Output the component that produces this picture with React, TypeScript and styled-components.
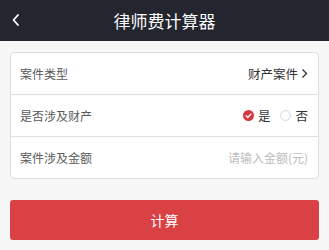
import React from "react";
import styled, { createGlobalStyle } from "styled-components";

const Global = createGlobalStyle`
  html, body { margin: 0; padding: 0; background: #f7f7f7; }
  body { font-family: "Noto Sans CJK SC", "Noto Sans", sans-serif; }
`;

const Page = styled.div`
  width: 329px;
  height: 250px;
  background: #f7f7f7;
  display: flex;
  flex-direction: column;
`;

const Header = styled.div`
  height: 41px;
  background: #23262e;
  display: flex;
  align-items: center;
  justify-content: center;
  position: relative;
  color: #fff;
  font-size: 17px;
`;

const Back = styled.div`
  position: absolute;
  left: 11px;
  top: 13px;
  width: 10px;
  height: 14px;
  display: flex;
`;

const Card = styled.div`
  margin: 11px 10px 0 10px;
  background: #fff;
  border: 1px solid #dedede;
  border-radius: 4px;
  display: flex;
  flex-direction: column;
`;

const Row = styled.div<{ $last?: boolean }>`
  height: 41px;
  display: flex;
  align-items: center;
  justify-content: space-between;
  padding: 0 10px 0 9px;
  border-bottom: ${(p) => (p.$last ? "none" : "1px solid #e0e0e0")};
`;

const Label = styled.span`
  font-size: 12px;
  color: #5a5a5a;
`;

const Value = styled.span`
  font-size: 12.5px;
  color: #333;
  display: flex;
  align-items: center;
  gap: 3px;
`;

const Placeholder = styled.span`
  font-size: 12px;
  color: #bcbcbc;
`;

const Radios = styled.div`
  display: flex;
  align-items: center;
  gap: 10px;
`;

const RadioItem = styled.span`
  display: flex;
  align-items: center;
  gap: 4px;
  font-size: 12.5px;
  color: #333;
`;

const Button = styled.div`
  margin: 21px 10px 0 10px;
  height: 40px;
  border-radius: 3px;
  background: #d94145;
  color: #fff;
  font-size: 14px;
  display: flex;
  align-items: center;
  justify-content: center;
`;

export default function App() {
  return (
    <Page>
      <Global />
      <Header>
        <Back>
          <svg width="10" height="14" viewBox="0 0 10 14">
            <path d="M7 2 L2.5 7 L7 12" stroke="#fff" strokeWidth="1.8" fill="none" strokeLinecap="round" strokeLinejoin="round" />
          </svg>
        </Back>
        律师费计算器
      </Header>
      <Card>
        <Row>
          <Label>案件类型</Label>
          <Value>
            财产案件
            <svg width="7" height="11" viewBox="0 0 7 11">
              <path d="M1.5 1.5 L5.5 5.5 L1.5 9.5" stroke="#333" strokeWidth="1.3" fill="none" />
            </svg>
          </Value>
        </Row>
        <Row>
          <Label>是否涉及财产</Label>
          <Radios>
            <RadioItem>
              <svg width="11" height="11" viewBox="0 0 11 11">
                <circle cx="5.5" cy="5.5" r="5.5" fill="#d9363e" />
                <path d="M2.8 5.6 L4.7 7.4 L8.2 3.8" stroke="#fff" strokeWidth="1.4" fill="none" />
              </svg>
              是
            </RadioItem>
            <RadioItem>
              <svg width="11" height="11" viewBox="0 0 11 11">
                <circle cx="5.5" cy="5.5" r="4.9" fill="#fff" stroke="#cfcfcf" strokeWidth="0.9" />
              </svg>
              否
            </RadioItem>
          </Radios>
        </Row>
        <Row $last>
          <Label>案件涉及金额</Label>
          <Placeholder>请输入金额(元)</Placeholder>
        </Row>
      </Card>
      <Button>计算</Button>
    </Page>
  );
}
